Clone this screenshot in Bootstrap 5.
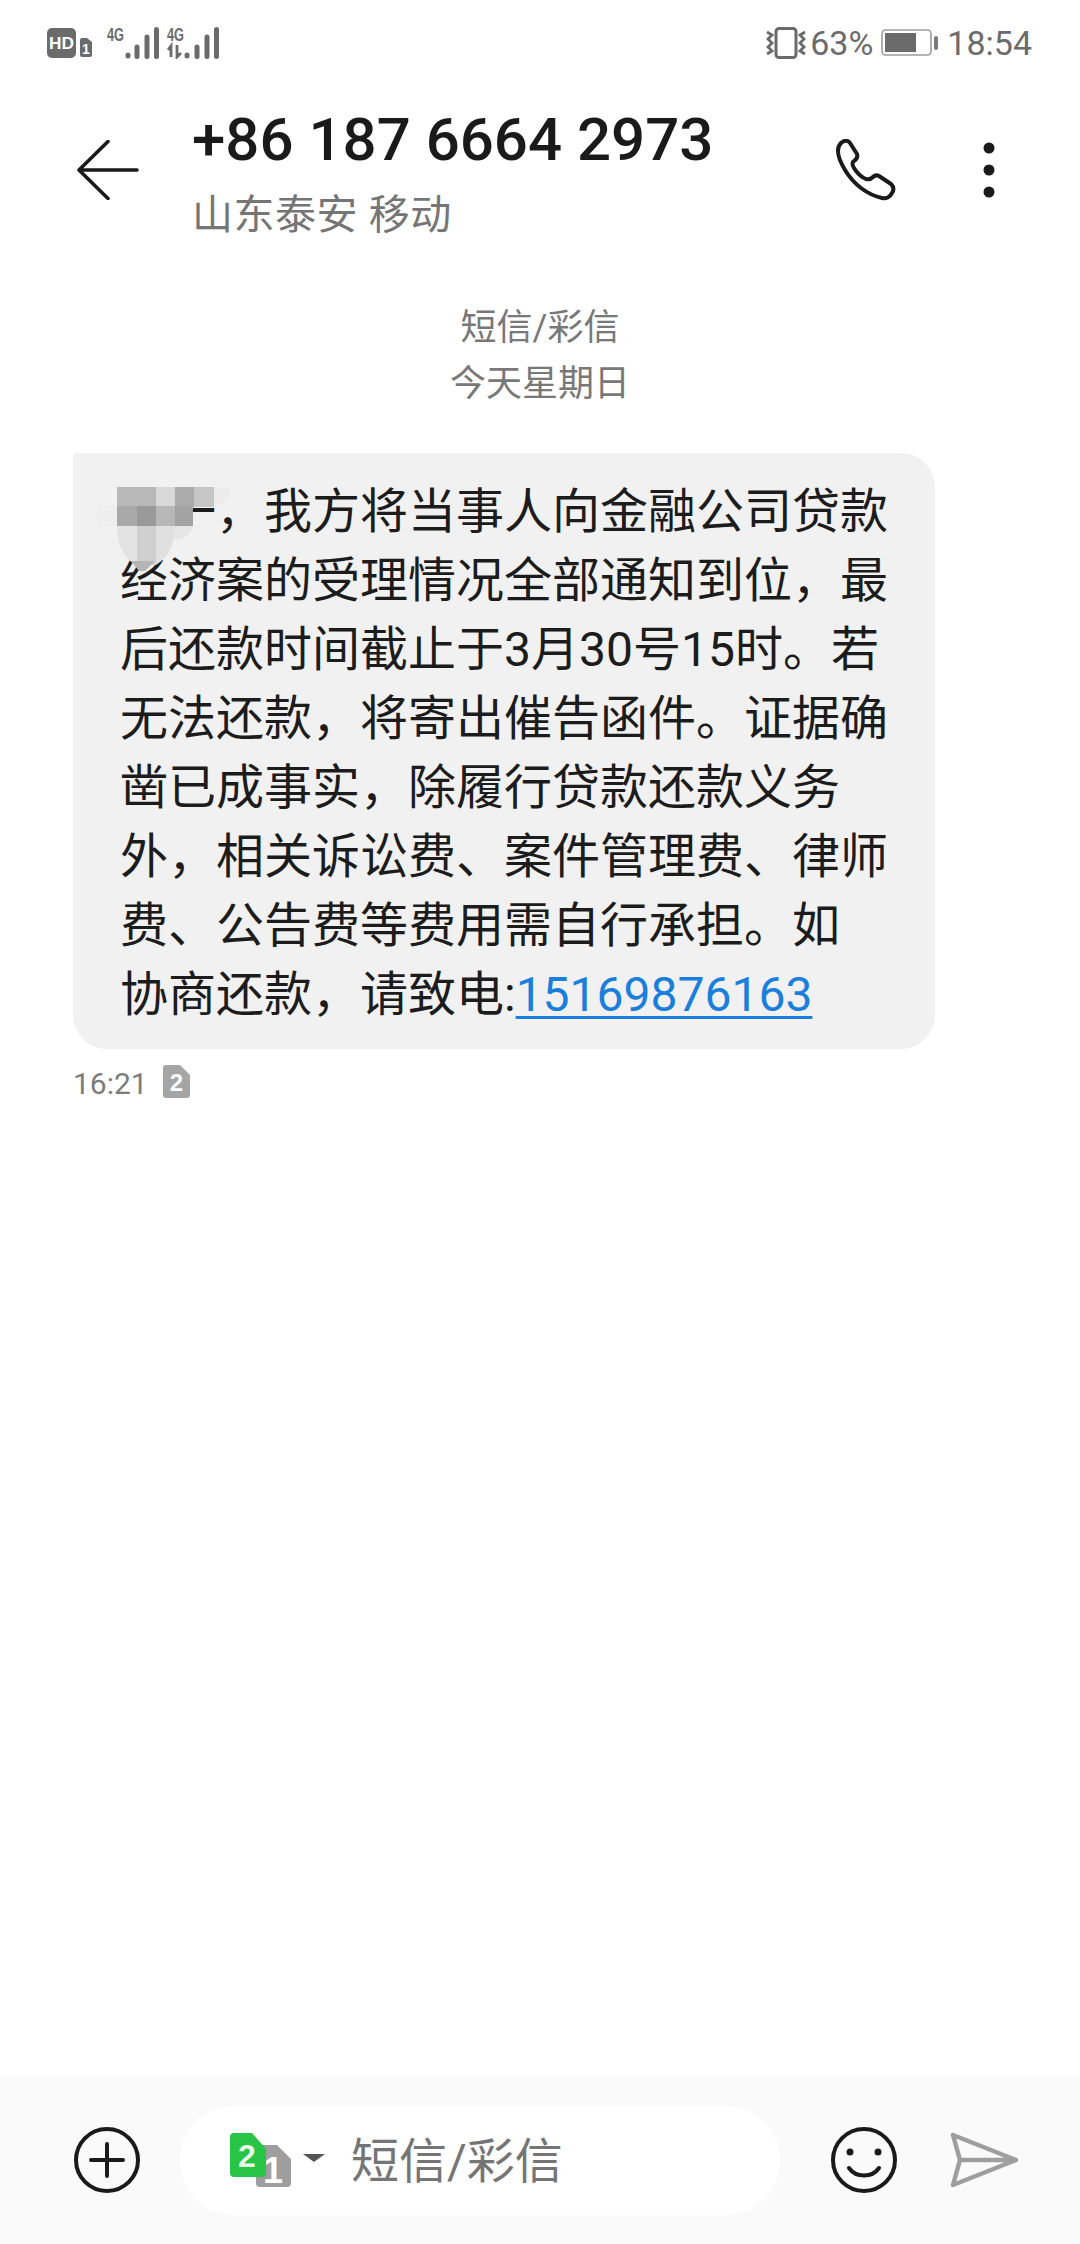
<!DOCTYPE html>
<html lang="zh-CN">
<head>
<meta charset="utf-8">
<title>短信</title>
<link href="https://cdn.jsdelivr.net/npm/bootstrap@5.3.0/dist/css/bootstrap.min.css" rel="stylesheet">
<style>
body{margin:0;background:#fff;font-family:Roboto,"Noto Sans CJK SC",sans-serif;color:#1a1a1a}
.screen{width:1080px;height:2244px;overflow:hidden}
.statusbar{height:100px;padding:27px 48px 0 47px;color:#6b6b6b}
.statusbar .stat-txt{font-size:34px;line-height:32px;height:32px}
.appbar{height:140px}
.back{width:62px;height:60px;margin-left:77px;margin-right:53px}
.titlebox{margin-top:5px;width:500px}
.phone-no{font-size:60px;font-weight:500;line-height:70px;white-space:nowrap;color:#1a1a1a}
.place{font-size:41px;line-height:50px;color:#757575;margin-top:15px;white-space:nowrap;letter-spacing:.5px}
.call{width:62px;height:62px;margin-left:142px}
.kebab{width:14px;height:56px;margin-left:86px}
.daylabel{margin-top:60px;font-size:36px;line-height:56px;color:#787878}
.bubble{width:862px;margin:41px 0 0 73px;padding:24px 20px 20px 47px;background:#f1f1f1;border-radius:4px 34px 34px 34px;font-size:48px;line-height:69px;white-space:nowrap;color:#1c1c1c}
.bubble a{color:#1a7fdc;text-decoration:underline;text-underline-offset:5px;text-decoration-thickness:3px}
.gap1{display:inline-block;width:48px}
.mosaic{position:absolute;left:18px;top:30px;width:140px;height:102px}
.meta{margin:16px 0 0 73px;height:36px;font-size:30px;color:#7c7c7c}
.simtag{margin-left:15px;margin-top:-3px}
.composer{height:168px;background:#fafafa;padding-left:74px}
.pill{width:600px;height:109px;margin-left:40px;background:#fff;border-radius:54px;padding-left:50px}
.simstack{position:relative;width:62px;height:54px}
.simstack svg{position:absolute}
.tri{width:22px;height:8px;margin-left:11px;margin-top:-4px}
.hint{font-size:48px;color:#757575;margin-left:26px;line-height:60px;margin-top:3px}
.smile{margin-left:51px}
.send{margin-left:53px}
.sigone{margin-left:14px;margin-top:-6px}
.sigtwo{margin-left:8px;margin-top:-6px}
</style>
</head>
<body>
<div class="screen d-flex flex-column">

  <div class="statusbar d-flex justify-content-between align-items-start">
    <div class="d-flex align-items-start">
      <svg width="46" height="31" viewBox="0 0 46 31">
        <rect x="0" y="1" width="29" height="30" rx="5" fill="#6b6b6b"/>
        <text x="14.500" y="22" text-anchor="middle" font-family="Liberation Sans" font-weight="700" font-size="17" textLength="25" lengthAdjust="spacingAndGlyphs" fill="#fff">HD</text>
        <path d="M35 11h5l5 4v13a2 2 0 0 1-2 2h-8a2 2 0 0 1-2-2V13a2 2 0 0 1 2-2z" fill="#6b6b6b"/>
        <text x="39" y="27" text-anchor="middle" font-family="Liberation Sans" font-weight="700" font-size="14" fill="#fff">1</text>
      </svg>
      <svg class="sigone" width="52" height="38" viewBox="0 -6 52 38">
        <text x="0" y="14" font-family="Liberation Sans" font-weight="700" font-size="18" textLength="17" lengthAdjust="spacingAndGlyphs" fill="#6b6b6b">4G</text>
        <g stroke="#6b6b6b" stroke-width="5" stroke-linecap="round">
          <path d="M21 28v1M30 20v9.500M40 10v19.500M49.500 2.500v27"/>
        </g>
      </svg>
      <svg class="sigtwo" width="52" height="38" viewBox="0 -6 52 38">
        <text x="0" y="14" font-family="Liberation Sans" font-weight="700" font-size="18" textLength="17" lengthAdjust="spacingAndGlyphs" fill="#6b6b6b">4G</text>
        <path d="M4 30V19l-3 4M10 18v12l4-4" stroke="#6b6b6b" stroke-width="2.800" fill="none"/>
        <g stroke="#6b6b6b" stroke-width="5" stroke-linecap="round">
          <path d="M20 28v1M30 20v9.500M40 10v19.500M49.500 2.500v27"/>
        </g>
      </svg>
    </div>
    <div class="d-flex align-items-start">
      <svg width="40" height="32" viewBox="0 0 40 32" fill="none" stroke="#6b6b6b">
        <rect x="10" y="1.500" width="20" height="29" rx="3" stroke-width="3"/>
        <path d="M1 5l5 3-4 4 4 4-4 4 4 4-5 3M39 5l-5 3 4 4-4 4 4 4-4 4 5 3" stroke-width="2.800"/>
      </svg>
      <div class="stat-txt ms-1">63%</div>
      <svg class="ms-2" width="58" height="30" viewBox="0 0 58 30">
        <rect x="1" y="3" width="49" height="25" rx="3.500" fill="none" stroke="#9c9c9c" stroke-width="1.600"/>
        <rect x="4" y="6" width="31" height="19" fill="#6b6b6b"/>
        <rect x="53" y="9" width="4" height="14" rx="2" fill="#7c7c7c"/>
      </svg>
      <div class="stat-txt ms-2">18:54</div>
    </div>
  </div>

  <div class="appbar d-flex align-items-center">
    <svg class="back" viewBox="0 0 62 60" fill="none" stroke="#1a1a1a" stroke-width="3.600" stroke-linecap="round" stroke-linejoin="round"><path d="M31 1.500 2 30l29 28.500M2 30h58"/></svg>
    <div class="titlebox align-self-start">
      <div class="phone-no">+86 187 6664 2973</div>
      <div class="place">山东泰安 移动</div>
    </div>
    <svg class="call" viewBox="0 0 62 62" fill="none" stroke="#1a1a1a" stroke-width="4" stroke-linejoin="round"><path d="M7 4C10 1 14 1 16 4l7 11c1 3 0 5-3 7-2 1-2 4 0 7 3 5 7 9 12 11 3 1 5 0 7-2 2-2 4-2 6-1l12 8c3 3 3 6 1 9-2 4-6 6-10 5C34 56 20 46 11 31 5 21 1 10 7 4Z"/></svg>
    <svg class="kebab" viewBox="0 0 14 56" fill="#1a1a1a"><circle cx="7" cy="6" r="5.500"/><circle cx="7" cy="28" r="5.500"/><circle cx="7" cy="50" r="5.500"/></svg>
  </div>

  <div class="daylabel text-center">短信/彩信<br>今天星期日</div>

  <div class="bubble position-relative"><span class="gap1"></span>一，我方将当事人向金融公司贷款<br>经济案的受理情况全部通知到位，最<br>后还款时间截止于3月30号15时。若<br>无法还款，将寄出催告函件。证据确<br>凿已成事实，除履行贷款还款义务<br>外，相关诉讼费、案件管理费、律师<br>费、公告费等费用需自行承担。如<br>协商还款，请致电:<a href="#">15169876163</a>
    <svg class="mosaic" viewBox="0 0 140 102" aria-hidden="true">
      <rect x="6" y="23" width="20" height="20" fill="#eeeeee"/>
      <rect x="26" y="4" width="20" height="20" fill="#b9b9b9"/><rect x="46" y="4" width="20" height="20" fill="#b9b9b9"/><rect x="65" y="4" width="20" height="20" fill="#d9d9d9"/><rect x="84" y="4" width="20" height="20" fill="#ababab"/><rect x="103" y="4" width="20" height="20" fill="#c6c6c6"/>
      <path d="M123 4h17c0 10-7 17-17 20z" fill="#ececec"/>
      <rect x="26" y="23" width="20" height="20" fill="#a9a9a9"/><rect x="46" y="23" width="20" height="20" fill="#9a9a9a"/><rect x="65" y="23" width="20" height="20" fill="#b7b7b7"/><rect x="84" y="23" width="18" height="20" fill="#a3a3a3"/>
      <path d="M26 43h20v39c-11-4-20-18-20-39z" fill="#e3e3e3"/>
      <rect x="46" y="43" width="19" height="39" fill="#cfcfcf"/>
      <path d="M65 43h19c0 16-5 30-19 39z" fill="#e0e0e0"/>
      <path d="M84 43h18c0 6-8 14-18 14z" fill="#e6e6e6"/>
      <path d="M40 78h24l-10 10h-6z" fill="#b5b5b5"/>
    </svg>
  </div>

  <div class="meta d-flex align-items-center">
    <span>16:21</span>
    <svg class="simtag" width="27" height="33" viewBox="0 0 27 33"><path d="M3 0h14l10 10v20a3 3 0 0 1-3 3H3a3 3 0 0 1-3-3V3a3 3 0 0 1 3-3z" fill="#a5a5a5"/><text x="13.500" y="26" text-anchor="middle" font-family="Liberation Sans" font-weight="700" font-size="24" fill="#fff">2</text></svg>
  </div>

  <div class="composer mt-auto d-flex align-items-center">
    <svg width="66" height="66" viewBox="0 0 66 66" fill="none" stroke="#1a1a1a" stroke-width="4" stroke-linecap="round"><circle cx="33" cy="33" r="31"/><path d="M33 17v32M17 33h32"/></svg>
    <div class="pill d-flex align-items-center">
      <div class="simstack">
        <svg style="left:26px;top:12px" width="35" height="50" viewBox="0 0 35 50"><path d="M4 0h17l14 14v24a4 4 0 0 1-4 4H4a4 4 0 0 1-4-4V4a4 4 0 0 1 4-4z" fill="#9e9e9e"/><text x="17" y="38" text-anchor="middle" font-family="Liberation Sans" font-weight="700" font-size="36" fill="#fff">1</text></svg>
        <svg style="left:0;top:0" width="36" height="44" viewBox="0 0 36 44"><path d="M4 0h18l14 16v24a4 4 0 0 1-4 4H4a4 4 0 0 1-4-4V4a4 4 0 0 1 4-4z" fill="#28c445"/><text x="17" y="34" text-anchor="middle" font-family="Liberation Sans" font-weight="700" font-size="32" fill="#e6f8e9">2</text></svg>
      </div>
      <svg class="tri" viewBox="0 0 22 8"><path d="M0 0h22L11 8z" fill="#555"/></svg>
      <div class="hint">短信/彩信</div>
    </div>
    <svg class="smile" width="66" height="66" viewBox="0 0 66 66" fill="none" stroke="#1a1a1a" stroke-width="4" stroke-linecap="round"><circle cx="33" cy="33" r="31"/><path d="M18 41c7 10 23 10 30 0"/><circle cx="19" cy="25" r="3.500" fill="#1a1a1a" stroke="none"/><circle cx="47" cy="25" r="3.500" fill="#1a1a1a" stroke="none"/></svg>
    <svg class="send" width="68" height="56" viewBox="0 0 68 56" fill="none" stroke="#9e9e9e" stroke-width="4.500" stroke-linecap="round" stroke-linejoin="round"><path d="M3 3l63 25L3 53l7-25zM10 28h56"/></svg>
  </div>

</div>
<script src="https://cdn.jsdelivr.net/npm/bootstrap@5.3.0/dist/js/bootstrap.bundle.min.js"></script>
</body>
</html>
